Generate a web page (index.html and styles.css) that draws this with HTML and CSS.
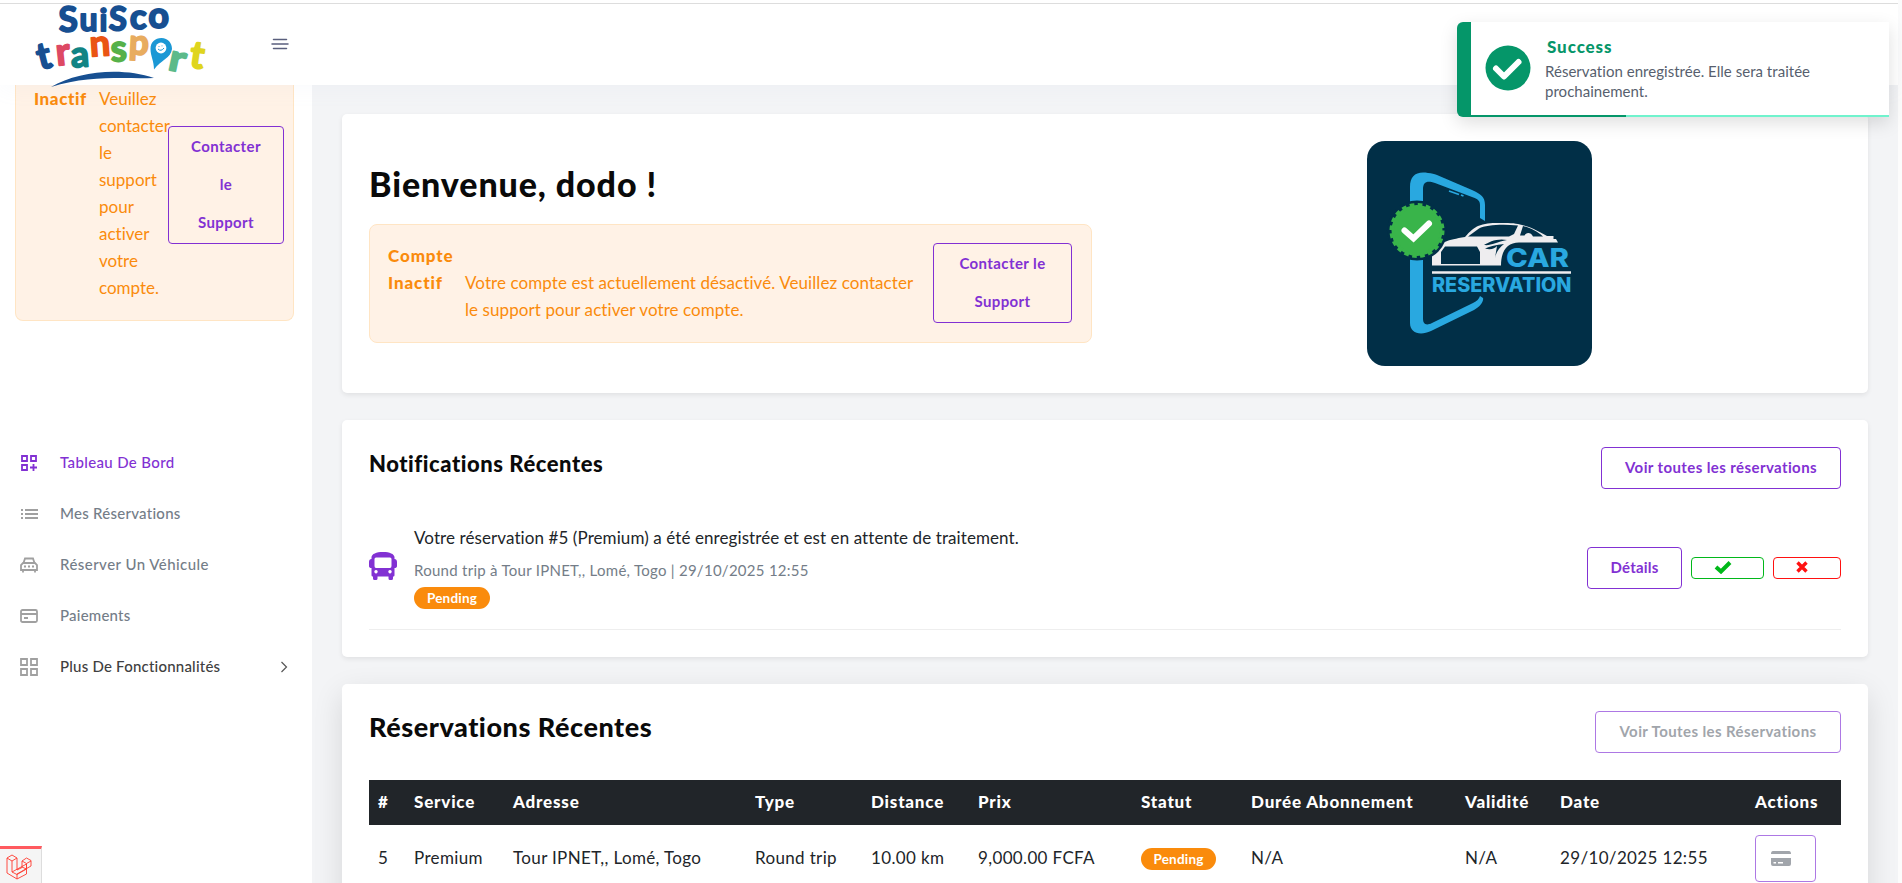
FILE: index.html
```html
<!DOCTYPE html>
<html lang="fr">
<head>
<meta charset="utf-8">
<title>SuiSco Transport</title>
<link rel="stylesheet" href="styles.css">
</head>
<body>
<header class="topbar">
  <svg class="logo" viewBox="30 0 180 90">
    <g class="logo-word">
      <text class="navy" transform="translate(59 32) rotate(-2)" font-size="35">S</text>
      <text class="navy" transform="translate(79.500 31)" font-size="32">u</text>
      <text class="navy" transform="translate(99.500 30.500)" font-size="31">i</text>
      <text class="navy" transform="translate(108.500 30) rotate(2)" font-size="33">S</text>
      <text class="navy" transform="translate(130 28.500) scale(1.180 1.180)" font-size="29">c</text>
      <text class="navy" transform="translate(148.500 28) scale(1.220 1.220)" font-size="29">o</text>
      <text class="navy" transform="translate(40 70) rotate(-14)" font-size="37">t</text>
      <text class="rose" transform="translate(57 65.500) rotate(-6)" font-size="38">r</text>
      <text class="teal" transform="translate(71.500 67.500) rotate(-4)" font-size="36">a</text>
      <text class="red" transform="translate(90.500 56.500) rotate(-4)" font-size="36">n</text>
      <text class="green" transform="translate(111 61.500) rotate(-2)" font-size="37">s</text>
      <text class="sand" transform="translate(128.500 54) rotate(3)" font-size="35">p</text>
      <text class="mint" transform="translate(167 69.500) rotate(12) scale(1.200 1)" font-size="37">r</text>
      <text class="lemon" transform="translate(188.500 67) rotate(8)" font-size="38">t</text>
    </g>
    <path d="M154 69.500C154 61 150.500 56 150.500 49C150.500 42 155 38 161.500 38C168 38 172 43 172 49C171 58 161 60 154 69.500Z" fill="#1b98d5"/>
    <circle cx="161" cy="48" r="5.400" fill="#fff"/>
    <path d="M158 49q3 3 6 -1M159 46v.8M162 45.500v.8" stroke="#1b98d5" stroke-width="1" fill="none"/>
    <path d="M51 87C78 71 122 67 154 78C123 79 89 75 51 87Z" fill="#174f91"/>
  </svg>
  <svg class="burger" viewBox="0 0 18 12"><path d="M2.500 1.500H15.500M1 6H17M2.500 10.500H15.500" stroke="#5a5f7d" stroke-width="1.500" stroke-linecap="round"/></svg>
</header>
<div class="shell">
  <aside class="sidebar">
    <div class="side-alert">
      <strong>Inactif</strong>
      <p>Veuillez<br>contacter<br>le<br>support<br>pour<br>activer<br>votre<br>compte.</p>
      <a class="btn tall">Contacter<br>le<br>Support</a>
    </div>
    <nav class="nav">
      <a class="active"><svg viewBox="0 0 18 18"><path d="M2 2h5v5H2zM11 2h5v5h-5zM2 11h5v5H2zM13.500 10v7M10 13.500h7"/></svg><span class="n1">Tableau De Bord</span></a>
      <a><svg viewBox="0 0 18 18"><path d="M1 5h2M5 5h13M1 9h2M5 9h13M1 13h2M5 13h13"/></svg><span class="n2">Mes Réservations</span></a>
      <a><svg viewBox="0 0 18 18"><path d="M3.500 7L5 2.500h8L14.500 7M3 7h12l2 2v5H1V9zM3 14v2.500M15 14v2.500M4 10.500h2M8 10.500h2M12 10.500h2"/></svg><span class="n3">Réserver Un Véhicule</span></a>
      <a><svg viewBox="0 0 18 18"><rect x="1" y="3" width="16" height="12" rx="1.500"/><path d="M1 7h16M4 11h4"/></svg><span class="n4">Paiements</span></a>
      <a class="dark"><svg viewBox="0 0 18 18"><path d="M1 1h6v6H1zM11 1h6v6h-6zM1 11h6v6H1zM11 11h6v6h-6z"/></svg><span class="n5">Plus De Fonctionnalités</span><svg class="chev" viewBox="0 0 8 12"><path d="M1.500 1L6.500 6L1.500 11"/></svg></a>
    </nav>
  </aside>
  <main class="main">
    <section class="card welcome">
      <div class="welcome-text">
        <h1>Bienvenue, dodo !</h1>
        <div class="alert">
          <strong>Compte<br>Inactif</strong>
          <p>Votre compte est actuellement désactivé. Veuillez contacter<br>le support pour activer votre compte.</p>
          <a class="btn tall">Contacter le<br>Support</a>
        </div>
      </div>
      <svg class="poster" viewBox="0 0 225 225">
        <rect width="225" height="225" rx="18" fill="#012f47"/>
        <path d="M43 66V46C43 35 49 30 61 32C65 32 67 33 70 34L105 49C114 53 118 56 118 64V80L113 77V64C113 60 111 58 105 56L68 42C60 39 56 41 56 48V66ZM43 116H56V178C56 183 59 185 65 182L106 162C110 160 112 158 113 155L116 157C117 160 113 166 107 169L64 190C53 195 43 192 43 182Z" fill="#29a8e0"/>
        <path d="M82 50L92 53.500M94 54L96.500 55" stroke="#29a8e0" stroke-width="1.800"/>
        <path d="M65 124.500V111L68 109C74 101 80 99 98 96C103 90 107 87 111 85C117 82.500 124 82 131 82C141 82 148 82 153 83.500C161 85 168 88 180 95H186.500V98H189L191 101.500H152C140 101.500 134 110 134 124.500ZM74 123H113V111L110 105.500H78L74 111ZM101 95.500L142 95.500L147 93L151 84.500C134 83 119 84 112 87.500ZM153 94.500L157.500 94.500C159 91 164 91 166 95.500H176C170 90 164 87 156 85ZM117 104C124 105 129 101 140 99C130 97 122 101 117 104ZM118 107.500C123 109 128 108 130 105L128 117C129 111 133 106 137 103C129 104 123 105 118 107.500Z" fill="#eeedef" fill-rule="evenodd"/>
        <path d="M65 131.500H204" stroke="#eeedef" stroke-width="2.500"/>
        <circle cx="50" cy="89.500" r="30" fill="#012f47"/>
        <circle cx="50" cy="89.500" r="25.500" fill="#39b44a"/>
        <circle cx="50" cy="89.500" r="25" fill="none" stroke="#39b44a" stroke-width="5" stroke-dasharray="4.500 3.354"/>
        <path d="M37.500 89.500L46.500 97.500L62 82.500" fill="none" stroke="#fff" stroke-width="6" stroke-linecap="round"/>
        <text class="poster-text" x="139" y="125.500" font-size="26" textLength="63" lengthAdjust="spacingAndGlyphs">CAR</text>
        <text class="poster-text" x="65" y="151.300" font-size="19.500" textLength="139.500" lengthAdjust="spacingAndGlyphs">RESERVATION</text>
      </svg>
    </section>
    <section class="card notes">
      <div class="card-head"><h2>Notifications Récentes</h2><a class="btn">Voir toutes les réservations</a></div>
      <div class="note">
        <svg class="bus" viewBox="0 0 28 28"><path fill-rule="evenodd" d="M14 0C21 0 25 2 25.500 5V7C27 7 28 8 28 10V14C28 15.500 27 16 25.500 16V23C25.500 24 25 24.500 24 24.500V26.500Q24 28 22.500 28H21Q19.500 28 19.500 26.500V24.500H8.500V26.500Q8.500 28 7 28H5.500Q4 28 4 26.500V24.500C3 24.500 2.500 24 2.500 23V16C1 16 0 15.500 0 14V10C0 8 1 7 2.500 7V5C3 2 7 0 14 0ZM7 5.500Q5.500 5.500 5.500 7V14Q5.500 16 7 16H21Q22.500 16 22.500 14V7Q22.500 5.500 21 5.500ZM7 18a1.700 1.700 0 1 0 .01 0ZM21 18a1.700 1.700 0 1 0 .01 0Z"/></svg>
        <div class="note-body">
          <p class="note-title">Votre réservation #5 (Premium) a été enregistrée et est en attente de traitement.</p>
          <p class="note-meta">Round trip à Tour IPNET,, Lomé, Togo | 29/10/2025 12:55</p>
          <span class="badge">Pending</span>
        </div>
        <div class="note-actions">
          <a class="btn details">Détails</a>
          <a class="btn ok"><svg viewBox="0 0 18 14"><path d="M2 7L7 11.500L16 2.500"/></svg></a>
          <a class="btn no"><svg viewBox="0 0 12 12"><path d="M1.500 1.500L10.500 10.500M10.500 1.500L1.500 10.500"/></svg></a>
        </div>
      </div>
    </section>
    <section class="card recent">
      <div class="card-head"><h2 class="big">Réservations Récentes</h2><a class="btn off">Voir Toutes les Réservations</a></div>
      <div class="row thead"><span>#</span><span>Service</span><span>Adresse</span><span>Type</span><span>Distance</span><span>Prix</span><span>Statut</span><span>Durée Abonnement</span><span>Validité</span><span>Date</span><span>Actions</span></div>
      <div class="row tbody"><span>5</span><span>Premium</span><span>Tour IPNET,, Lomé, Togo</span><span>Round trip</span><span>10.00 km</span><span>9,000.00 FCFA</span><b class="badge">Pending</b><span>N/A</span><span>N/A</span><span>29/10/2025 12:55</span><a class="btn pay"><svg viewBox="0 0 20 16"><path fill-rule="evenodd" d="M2 1H18Q20 1 20 4H0Q0 1 2 1ZM0 8H20V14Q20 16 18 16H2Q0 16 0 14ZM2.500 12V13.500H5V12ZM7 12V13.500H12V12Z"/></svg></a></div>
    </section>
  </main>
</div>
<div class="toast">
  <svg viewBox="0 0 46 46"><circle cx="23" cy="23" r="22.500" fill="#059669"/><path d="M11 23.500L19 31.500L33.500 17" fill="none" stroke="#fff" stroke-width="6" stroke-linecap="round" stroke-linejoin="round"/></svg>
  <div><strong>Success</strong><p>Réservation enregistrée. Elle sera traitée<br>prochainement.</p></div>
  <i class="progress"></i>
</div>
<div class="debug-logo"><svg viewBox="0 0 26 26"><path d="M1 4L6 1L11 4V16L16 13.500V7L20.500 4L25 6.500V12L11 20V25L1 19ZM1 4L6 7L11 4M6 7V18L20.500 10V15L11 20.500M16 7L20.500 9.500L25 7M20.500 9.500V15M6 18L11 20.500M16 13L20.500 15V20L11 25"/></svg></div>
</body>
</html>
```
FILE: styles.css
```css
* { box-sizing: border-box; }
body { margin: 0; width: 1902px; height: 883px; overflow: hidden; position: relative; background: #fcfcfc; font-family: Lato, "Open Sans", sans-serif; font-size: 17px; line-height: 27px; color: #212529; font-variant-ligatures: none; }
p, h1, h2 { margin: 0; white-space: nowrap; }
strong { font-weight: 900; letter-spacing: .9px; }

.topbar { position: relative; z-index: 2; width: 1898px; height: 85px; padding-left: 30px; display: flex; background: linear-gradient(#fff 3px, #ddd 3px, #ddd 4px, #fff 4px); box-shadow: 0 5px 20px rgba(173, 181, 217, .06); }
.logo { width: 180px; height: 90px; flex: none; overflow: visible; }
.logo-word { font-weight: 700; stroke-width: 1.8; stroke-linejoin: round; }
.navy { fill: #174f91; stroke: #174f91; }
.rose { fill: #dd4964; stroke: #dd4964; }
.teal { fill: #118484; stroke: #118484; }
.red { fill: #ea5514; stroke: #ea5514; }
.green { fill: #56b149; stroke: #56b149; }
.sand { fill: #e8ac5f; stroke: #e8ac5f; }
.mint { fill: #5bba8a; stroke: #5bba8a; }
.lemon { fill: #dfd51e; stroke: #dfd51e; }
.burger { width: 18px; height: 12px; margin: 38px 0 0 61px; }

.shell { display: flex; width: 1898px; height: 798px; }
.sidebar { width: 312px; flex: none; background: #fff; }
.side-alert { display: flex; margin-left: 15px; width: 279px; height: 236px; padding: 0 9px 0 18px; border: 1px solid #ffe5c4; border-top: 0; border-radius: 0 0 8px 8px; background: #fff2e6; color: #fa8b0c; }
.side-alert strong { width: 65px; letter-spacing: .6px; }
.side-alert p { width: 69px; }
.side-alert .btn { width: 116px; height: 118px; margin-top: 41px; }
.btn { display: flex; align-items: center; justify-content: center; flex: none; padding-bottom: 1px; border: 1px solid #8231d3; border-radius: 4px; color: #8231d3; font-size: 15px; font-weight: 700; letter-spacing: .4px; text-align: center; white-space: nowrap; }
.tall { line-height: 38px; padding-bottom: 3px; }

.nav { padding-top: 116px; }
.nav a { display: flex; align-items: center; height: 51px; padding: 0 24px 0 20px; color: #747d88; font-size: 15px; font-weight: 500; }
.nav svg { width: 18px; height: 18px; margin-right: 22px; fill: none; stroke: #a0a0a0; stroke-width: 1.8; }
.nav .active { color: #8231d3; }
.nav .active svg { stroke: #8231d3; }
.nav .dark { color: #404040; }
.nav .chev { width: 8px; height: 12px; margin: 0 0 0 auto; stroke: #555; stroke-width: 1.2; }
.n1 { letter-spacing: .36px; }
.n2 { letter-spacing: .26px; }
.n3 { letter-spacing: .45px; }
.n4, .n5 { letter-spacing: .22px; }

.main { flex: 1; padding: 29px 30px 0; background: #f3f4f6; }
.card { background: #fff; border-radius: 5px; padding: 27px; box-shadow: 0 2px 5px rgba(0, 0, 0, .08); }
h1, h2 { color: #0a0a0a; font-weight: 900; }
h1 { font-size: 34px; line-height: 42px; letter-spacing: .9px; }
h2 { font-size: 22px; line-height: 33px; letter-spacing: .54px; }
.big { font-size: 27px; line-height: 31px; }
.welcome { display: flex; height: 279px; }
.welcome-text { width: 723px; margin: 22px 275px 0 0; }
.alert { display: flex; height: 119px; margin-top: 19px; padding: 17px 19px 18px 18px; border: 1px solid #ffe5c4; border-radius: 8px; background: #fff2e6; color: #fa8b0c; }
.alert strong { width: 77px; }
.alert p { margin-top: 27px; flex: 1; letter-spacing: .08px; }
.alert .btn { width: 139px; height: 80px; margin-top: 1px; }
.poster { width: 225px; height: 225px; }
.poster-text { fill: #29a8e0; font-family: Inter, sans-serif; font-weight: 800; }

.notes { height: 237px; margin-top: 27px; }
.card-head { display: flex; justify-content: space-between; }
.card-head .btn { width: 240px; height: 42px; }
.note { display: flex; height: 110px; margin-top: 31px; border-bottom: 1px solid #eee; }
.bus { width: 28px; height: 28px; margin: 32px 17px 0 0; fill: #8231d3; }
.note-body { flex: 1; padding-top: 4px; }
.note-title { letter-spacing: .09px; }
.note-meta { margin-top: 6px; font-size: 15px; letter-spacing: .27px; color: #747d88; }
.badge { display: flex; align-items: center; justify-content: center; width: 76px; height: 22px; margin-top: 3px; border-radius: 11px; background: #fa8b0c; color: #fff; font-size: 13.500px; font-weight: 700; letter-spacing: .2px; line-height: 20px; }
.note-actions { display: flex; align-items: center; gap: 9px; height: 96px; }
.note-actions .details { width: 95px; height: 42px; letter-spacing: .2px; }
.btn svg { fill: none; stroke-width: 4; }
.note-actions .ok, .note-actions .no { height: 22px; padding: 0 19px 3px 0; }
.ok { width: 73px; border-color: #01b81a; stroke: #01b81a; }
.no { width: 68px; border-color: #f11; stroke: #f11; }
.ok svg { width: 18px; height: 14px; margin-left: 10px; }
.btn.no svg { width: 12px; height: 12px; margin-left: 9px; stroke-width: 3.4; }

.recent { height: 240px; margin-top: 27px; box-shadow: 0 10px 30px rgba(0, 0, 0, .12); }
.card-head .off { width: 246px; border-color: #ad78e4; color: #a1a5ab; }
.row { display: grid; align-items: center; grid-template-columns: 36px 99px 242px 116px 107px 163px 110px 214px 95px 195px 1fr; padding-left: 9px; white-space: nowrap; }
.thead { height: 45px; margin-top: 27px; padding-bottom: 2px; background: #212529; color: #fff; font-weight: 900; letter-spacing: .8px; }
.tbody { height: 67px; letter-spacing: .35px; }
.tbody span { margin-top: -2px; }
.tbody .badge { width: 75px; margin: 1px 0 0; }
.pay { width: 61px; height: 47px; border-color: #ad78e4; padding-right: 10px; }
.btn.pay svg { width: 20px; height: 16px; fill: #a1a5ab; }

.toast { position: absolute; z-index: 3; left: 1457px; top: 22px; width: 432px; height: 95px; padding: 17px 0 0 14px; display: flex; background: #fff; border-left: 14px solid #059669; border-radius: 6px 0 0 6px; box-shadow: 0 6px 18px rgba(0, 0, 0, .13); line-height: 20px; color: #575f6e; font-size: 15px; letter-spacing: .03px; }
.toast svg { width: 46px; height: 46px; margin: 6px 14px 0 0; }
.toast strong { display: block; margin: -3px 0 3px 2px; color: #059669; font-size: 17px; line-height: 22px; }
.progress { position: absolute; left: 0; right: 0; bottom: 0; height: 2px; background: linear-gradient(90deg, #059669 155px, #70f3cd 155px); }
.debug-logo { position: absolute; z-index: 4; left: 0; bottom: 0; width: 42px; height: 37px; padding: 5px 0 0 6px; border-top: 3px solid #ff5a5f; border-right: 1px solid #ddd; background: #f5f5f5; }
.debug-logo svg { width: 26px; height: 26px; fill: none; stroke: #ff3b30; stroke-width: .9; }
```
